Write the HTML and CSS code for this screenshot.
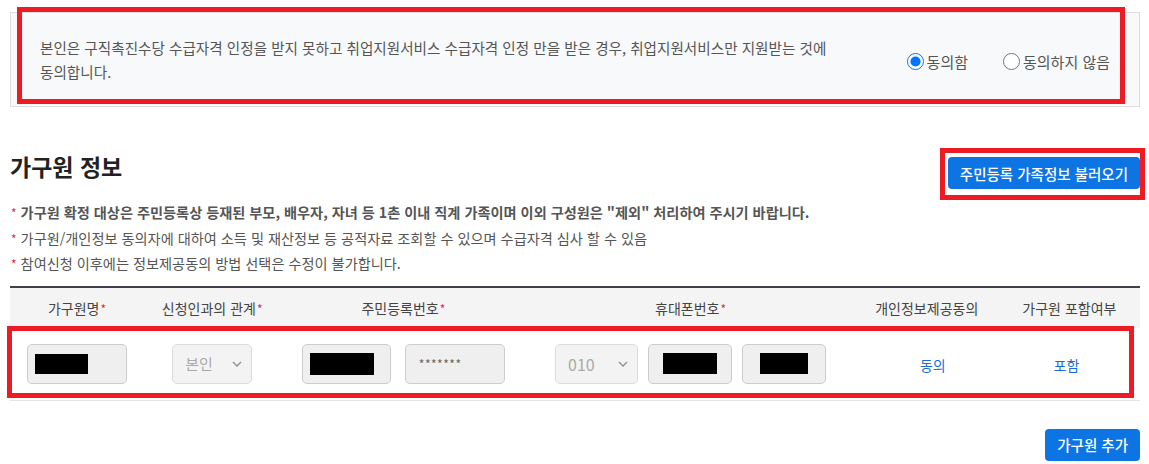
FILE: index.html
```html
<!DOCTYPE html>
<html lang="ko">
<head>
    <meta charset="UTF-8">
    <meta name="viewport" content="width=device-width, initial-scale=1.0">
    <title>가구원 정보</title>
    <link rel="stylesheet" href="styles.css">
</head>
<body>

    <div class="page">

        <!-- 동의 박스 -->
        <div class="agree-box">
            <p class="agree-text">본인은 구직촉진수당 수급자격 인정을 받지 못하고 취업지원서비스 수급자격 인정 만을 받은 경우, 취업지원서비스만 지원받는 것에 동의합니다.</p>
            <div class="agree-options">
                <label class="radio"><input type="radio" name="agree" checked> 동의함</label>
                <label class="radio"><input type="radio" name="agree"> 동의하지 않음</label>
            </div>
        </div>

        <!-- 가구원 정보 -->
        <div class="section-head">
            <h2 class="section-title">가구원 정보</h2>
            <button type="button" class="btn-blue">주민등록 가족정보 불러오기</button>
        </div>

        <ul class="notes">
            <li class="strong"><span class="req">*</span> 가구원 확정 대상은 주민등록상 등재된 부모, 배우자, 자녀 등 1촌 이내 직계 가족이며 이외 구성원은 "제외" 처리하여 주시기 바랍니다.</li>
            <li><span class="req">*</span> 가구원/개인정보 동의자에 대하여 소득 및 재산정보 등 공적자료 조회할 수 있으며 수급자격 심사 할 수 있음</li>
            <li><span class="req">*</span> 참여신청 이후에는 정보제공동의 방법 선택은 수정이 불가합니다.</li>
        </ul>

        <table class="member-table">
            <colgroup>
                <col style="width: 134px">
                <col style="width: 136px">
                <col style="width: 246px">
                <col style="width: 328px">
                <col style="width: 144px">
                <col style="width: 141px">
            </colgroup>
            <thead>
                <tr>
                    <th>가구원명<span class="req">*</span></th>
                    <th>신청인과의 관계<span class="req">*</span></th>
                    <th>주민등록번호<span class="req">*</span></th>
                    <th>휴대폰번호<span class="req">*</span></th>
                    <th>개인정보제공동의</th>
                    <th>가구원 포함여부</th>
                </tr>
            </thead>
            <tbody>
                <tr>
                    <td>
                        <div class="field w100"><span class="mask m-name"></span></div>
                    </td>
                    <td>
                        <div class="select w80 disabled">
                            <span>본인</span>
                            <svg width="10" height="6" viewBox="0 0 10 6"><path d="M1 1l4 4 4-4" fill="none" stroke="#999" stroke-width="1.6"/></svg>
                        </div>
                    </td>
                    <td>
                        <div class="cell-group">
                            <div class="field w89"><span class="mask m-ssn"></span></div>
                            <div class="field w100 stars">*******</div>
                        </div>
                    </td>
                    <td>
                        <div class="cell-group phone">
                            <div class="select w83 disabled">
                                <span class="num">010</span>
                                <svg width="10" height="6" viewBox="0 0 10 6"><path d="M1 1l4 4 4-4" fill="none" stroke="#999" stroke-width="1.6"/></svg>
                            </div>
                            <div class="field w84 center"><span class="mask m-phone"></span></div>
                            <div class="field w84 center"><span class="mask m-phone2"></span></div>
                        </div>
                    </td>
                    <td class="agree-cell"><a href="#" class="link">동의</a></td>
                    <td class="include-cell"><a href="#" class="link">포함</a></td>
                </tr>
            </tbody>
        </table>

        <div class="actions">
            <button type="button" class="btn-blue small">가구원 추가</button>
        </div>
    </div>

    <!-- 표시용 빨간 박스 -->
    <div class="mark mark-agree"></div>
    <div class="mark mark-load"></div>
    <div class="mark mark-row"></div>

</body>
</html>
```

FILE: styles.css
```css
body {
    margin: 0;
    font-family: "Noto Sans CJK KR", "Noto Sans", sans-serif;
    color: #555;
    background-color: #fff;
}

.page {
    margin: 0 9px 0 10px;
    padding-top: 12px;
}

/* 동의 박스 */
.agree-box {
    display: flex;
    align-items: center;
    justify-content: space-between;
    height: 95px;
    box-sizing: border-box;
    padding: 0 30px 0 29px;
    background: #f8f9fb;
    border: 1px solid #ddd;
}

.agree-text {
    margin: 0;
    max-width: 800px;
    font-size: 14.6px;
    line-height: 24px;
    color: #555;
}

.agree-options {
    display: flex;
    gap: 35px;
    margin-top: 4px;
    margin-right: -1px;
}

.radio {
    display: flex;
    align-items: center;
    gap: 3px;
    font-size: 15px;
    color: #555;
}

.radio input {
    width: 17px;
    height: 17px;
    margin: 0;
    accent-color: #0075ff;
}

/* 제목 */
.section-head {
    display: flex;
    justify-content: space-between;
    margin-top: 50px;
}

.section-title {
    margin: -3px 0 0 0;
    font-size: 23px;
    line-height: 24px;
    font-weight: bold;
    color: #222;
}

.btn-blue {
    height: 32px;
    padding: 0 12px;
    font-family: inherit;
    font-size: 14.5px;
    font-weight: 500;
    color: #fff;
    background-color: #0d74e3;
    border: none;
    border-radius: 4px;
    cursor: pointer;
}

/* 안내 */
.notes {
    list-style: none;
    margin: 11px 0 0 0;
    padding: 0;
    font-size: 14.2px;
    line-height: 24.5px;
    color: #555;
}

.notes .strong {
    font-weight: bold;
}

.req {
    color: #e8244f;
    font-size: 12px;
    font-weight: normal;
    margin-left: 1px;
}

/* 표 */
.member-table {
    width: 100%;
    margin-top: 9px;
    border-collapse: collapse;
    table-layout: fixed;
    border-top: 2px solid #3f3f4b;
}

.member-table th {
    height: 40px;
    padding: 0;
    font-size: 14px;
    font-weight: normal;
    color: #444;
    background-color: #f4f4f4;
    text-align: center;
}

.member-table td {
    height: 72px;
    padding: 0;
    text-align: center;
    border-bottom: 1px solid #e4e4e4;
}

.member-table td.agree-cell {
    padding-left: 12px;
}

.member-table td.include-cell {
    padding-right: 6px;
}

.member-table td > .field,
.member-table td > .select {
    margin: 0 auto;
}

.cell-group {
    display: flex;
    justify-content: center;
    gap: 14px;
}

.cell-group.phone {
    gap: 10px;
}

.field,
.select {
    display: flex;
    align-items: center;
    height: 40px;
    box-sizing: border-box;
    background: #efefef;
    border: 1px solid #ccc;
    border-radius: 5px;
}

.field {
    padding-left: 7px;
}

.field.center {
    justify-content: center;
    padding-left: 0;
}

.w80 { width: 80px; }
.w83 { width: 83px; }
.w84 { width: 84px; }
.w89 { width: 89px; }
.w100 { width: 100px; }

.mask {
    display: block;
    background: #000;
}

.m-name { width: 53px; height: 20px; }
.m-ssn { width: 64px; height: 22px; }
.m-phone { width: 54px; height: 21px; }
.m-phone2 { width: 48px; height: 21px; }

.stars {
    padding-left: 13px;
    font-size: 12px;
    color: #666;
    letter-spacing: 0.5px;
}

.select {
    justify-content: space-between;
    padding: 0 9px 0 12px;
}

.select.disabled {
    background: #f3f3f3;
    border-color: #ddd;
    color: #aaa;
    font-size: 15px;
}

.select .num {
    font-size: 16px;
}

.link {
    font-size: 14px;
    color: #1a6dd3;
    text-decoration: none;
}

.actions {
    display: flex;
    justify-content: flex-end;
    margin-top: 28px;
}

/* 빨간 표시 박스 */
.mark {
    position: absolute;
    box-sizing: border-box;
    border: 5px solid #ed1c24;
}

.mark-agree {
    left: 17px;
    top: 7px;
    width: 1108px;
    height: 97px;
}

.mark-load {
    left: 940px;
    top: 148px;
    width: 205px;
    height: 52px;
}

.mark-row {
    left: 7px;
    top: 326px;
    width: 1127px;
    height: 72px;
}
```
